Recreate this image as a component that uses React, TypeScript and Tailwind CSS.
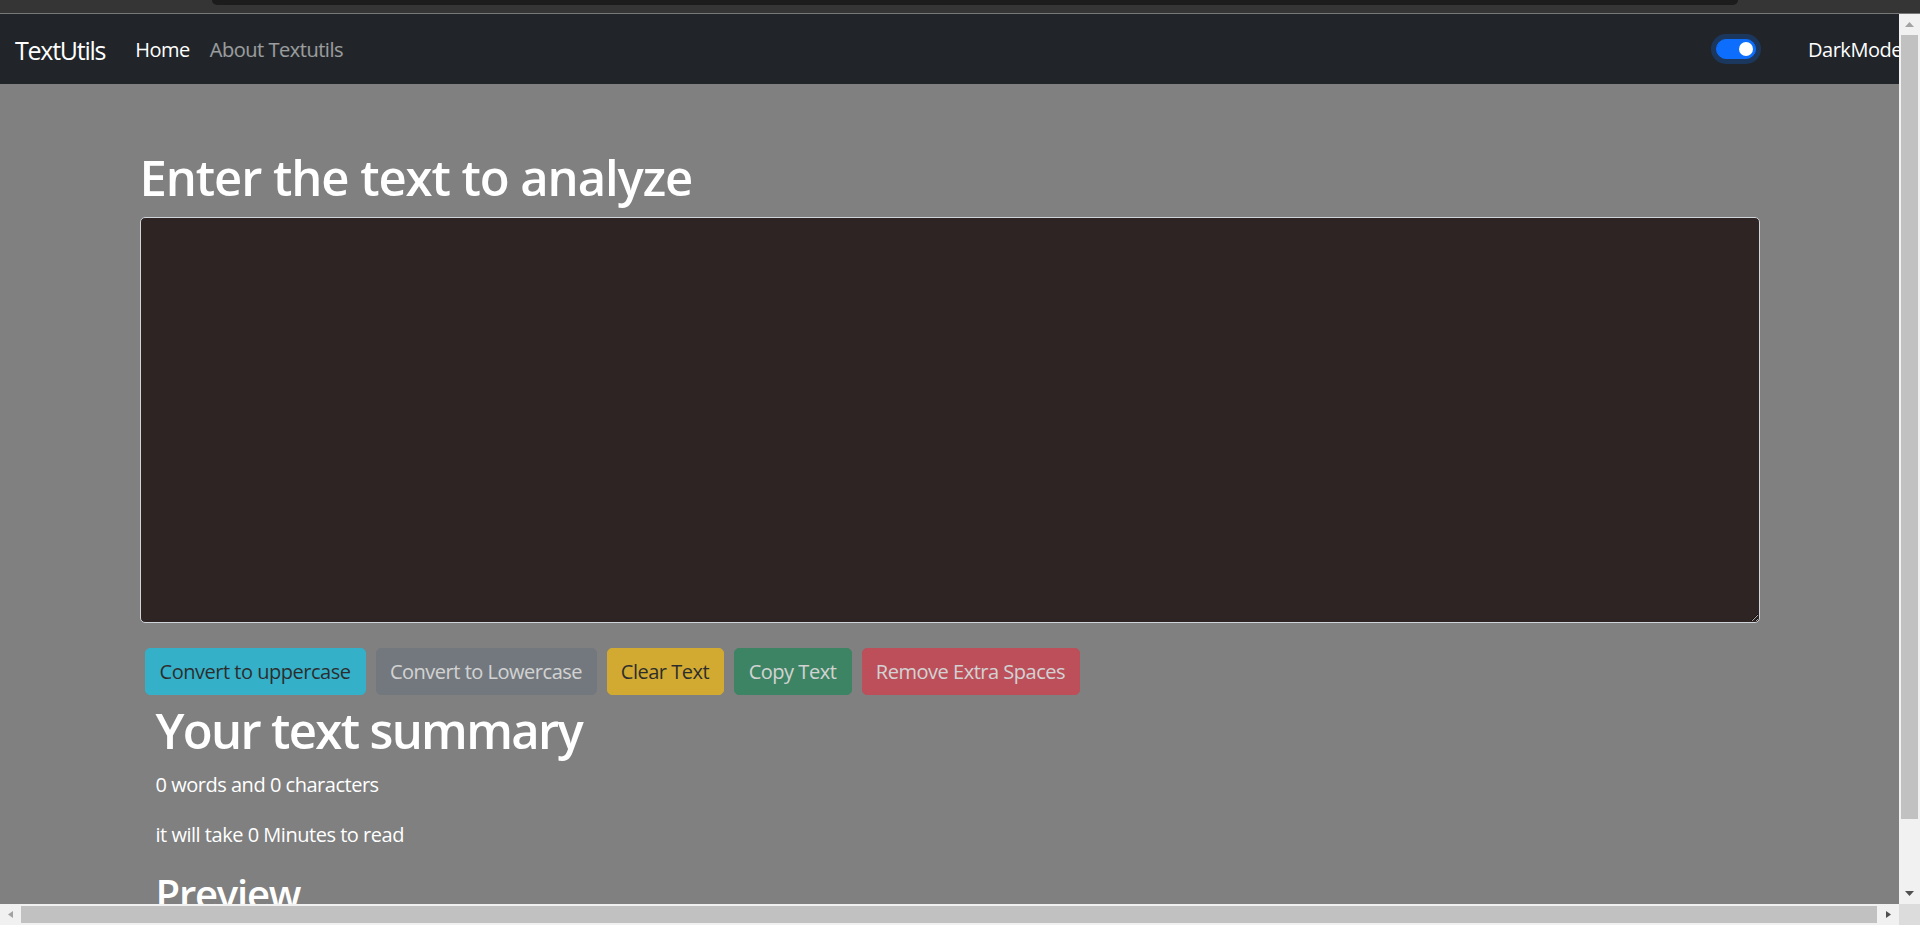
import { useState } from "react";

const BUTTONS = [
  { label: "Convert to uppercase", w: "w-[221px]", cls: "bg-[#0dcaf0] border-[#0dcaf0] text-black" },
  { label: "Convert to Lowercase", w: "w-[221px]", cls: "bg-[#6c757d] border-[#6c757d] text-white" },
  { label: "Clear Text", w: "w-[117px]", cls: "bg-[#ffc107] border-[#ffc107] text-black" },
  { label: "Copy Text", w: "w-[118px]", cls: "bg-[#198754] border-[#198754] text-white" },
  { label: "Remove Extra Spaces", w: "w-[218px]", cls: "bg-[#dc3545] border-[#dc3545] text-white" },
];

function Navbar() {
  return (
    <nav className="h-[70px] w-[1914px] shrink-0 bg-[#212529] px-[15px] pt-[2px] flex items-center">
      <span className="text-white text-[25px] leading-[38px] tracking-[-0.05em] mr-[20px]">TextUtils</span>
      <a className="text-white text-[20px] leading-[30px] px-[10px]">Home</a>
      <a className="text-white/55 text-[20px] leading-[30px] px-[10px]">About Textutils</a>

      <div className="ml-auto flex items-center -mt-[2px]">
        {/* switch */}
        <div className="w-[40px] h-[20px] rounded-full bg-[#0d6efd] border border-[#0d6efd] shadow-[0_0_0_5px_rgba(13,110,253,0.25)] flex items-center justify-end pr-[2px]">
          <span className="w-[14px] h-[14px] rounded-full bg-white" />
        </div>
        <label className="ml-[52px] mt-[2px] w-[91px] whitespace-nowrap text-white text-[20px] leading-[30px]">DarkMode</label>
      </div>
    </nav>
  );
}

function TextForm() {
  const [text, setText] = useState("");
  const words = text.split(/\s+/).filter((w) => w.length > 0).length;

  return (
    <>
      <div className="mx-auto w-[1650px] px-[15px] pt-[63px]">
        <h1 className="text-[49px] leading-[60px] font-semibold tracking-[-0.022em] mb-[10px] text-white">
          Enter the text to analyze
        </h1>
        <div className="mb-[20px]">
          <textarea
            value={text}
            onChange={(e) => setText(e.target.value)}
            className="block w-full h-[406px] bg-[#2e2424] text-white border border-[#ced4da] rounded-[5px] px-[15px] py-[7px] text-[20px] outline-none"
          />
        </div>
        <div className="flex">
          {BUTTONS.map((b) => (
            <button
              key={b.label}
              disabled={text.length === 0}
              className={`${b.w} ${b.cls} h-[47px] mx-[5px] my-[5px] border rounded-[5px] opacity-65 text-[20px] leading-[30px] whitespace-nowrap flex items-center justify-center`}
            >
              {b.label}
            </button>
          ))}
        </div>
      </div>

      <div className="mx-auto w-[1650px] px-[15px]">
        <div className="pl-[16px] text-white">
          <h1 className="text-[49px] leading-[60px] font-semibold tracking-[-0.034em] mb-[10px]">Your text summary</h1>
          <p className="text-[20px] leading-[30px] mb-[20px]">
            {words} words and {text.length} characters
          </p>
          <p className="text-[20px] leading-[30px] mb-[20px]">
            it will take {0.008 * words} Minutes to read
          </p>
          <h2 className="text-[40px] leading-[48px] font-semibold tracking-[-0.03em]">Preview</h2>
        </div>
      </div>
    </>
  );
}

function Arrow({ dir, color }: { dir: "up" | "down" | "left" | "right"; color: string }) {
  const d = {
    up: "M4.5 0L9 5H0z",
    down: "M0 0H9L4.5 5z",
    left: "M5 0V7L0 3.5z",
    right: "M0 0L5 3.5L0 7z",
  }[dir];
  const vertical = dir === "up" || dir === "down";
  return (
    <svg width={vertical ? 9 : 5} height={vertical ? 5 : 7} viewBox={vertical ? "0 0 9 5" : "0 0 5 7"}>
      <path d={d} fill={color} />
    </svg>
  );
}

export default function App() {
  return (
    <div className="w-[1920px] h-[925px] overflow-hidden flex flex-col font-['Segoe_UI','Open_Sans',sans-serif] tracking-[-0.03em]">
      {/* browser chrome strip */}
      <div className="h-[13px] shrink-0 bg-[#353535] flex">
        <div className="ml-[212px] w-[1526px] h-[5px] bg-[#1c1c1c] rounded-b-[8px]" />
      </div>
      <div className="h-px shrink-0 bg-[#787878]" />

      <div className="flex flex-1 min-h-0">
        <div className="w-[1899px] flex flex-col">
          {/* viewport */}
          <div className="flex-1 min-h-0 overflow-hidden bg-[#808080]">
            <Navbar />
            <div className="w-[1899px]">
              <TextForm />
            </div>
          </div>
          {/* horizontal scrollbar */}
          <div className="h-[21px] shrink-0 bg-[#f1f1f1] flex items-center">
            <div className="w-[21px] flex justify-center">
              <Arrow dir="left" color="#a3a3a3" />
            </div>
            <div className="w-[1856px] h-[17px] bg-[#c1c1c1]" />
            <div className="flex-1 flex justify-center">
              <Arrow dir="right" color="#505050" />
            </div>
          </div>
        </div>

        {/* vertical scrollbar */}
        <div className="w-[21px] flex flex-col">
          <div className="flex-1 bg-[#f1f1f1] flex flex-col items-center">
            <div className="h-[21px] flex items-center">
              <Arrow dir="up" color="#a3a3a3" />
            </div>
            <div className="w-[17px] h-[784px] bg-[#c1c1c1]" />
            <div className="flex-1" />
            <div className="h-[21px] flex items-center">
              <Arrow dir="down" color="#505050" />
            </div>
          </div>
          <div className="h-[21px] bg-[#dcdcdc]" />
        </div>
      </div>
    </div>
  );
}
